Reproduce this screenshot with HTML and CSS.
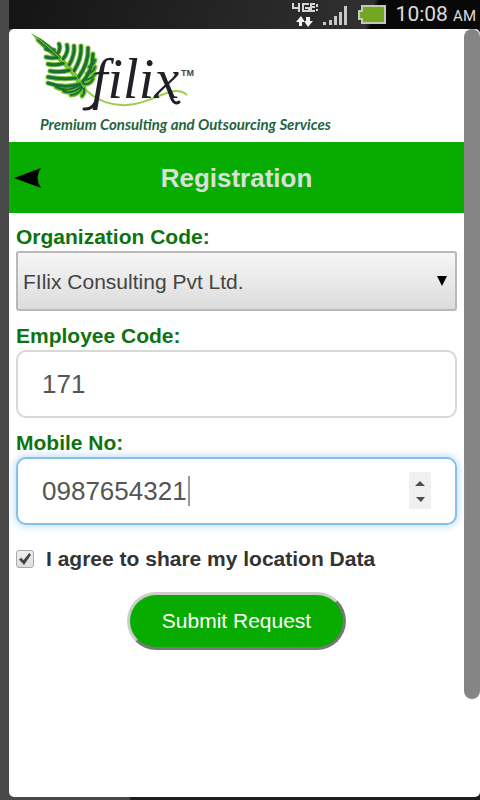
FILE: index.html
```html
<!DOCTYPE html>
<html lang="en">
<head>
  <meta charset="UTF-8">
  <meta name="viewport" content="width=device-width, initial-scale=1">
  <title>Registration</title>
  <link rel="stylesheet" href="styles.css">
</head>
<body>
  <!-- status bar -->
  <div class="statusbar">
    <svg class="network" width="28" height="26" viewBox="0 0 28 26" fill="none" stroke="#d4d4d4" stroke-width="2">
      <path d="M2 1v5h7M8 1v9M18 2h-6v7h6V6h-4M24 2h-4v7h4M20 5h4M26 2v3M26 7v2"/>
      <path d="M8 24v-4H5l5-6 4 6h-3v4zM15 15v4h-2l4 6 5-6h-3v-4z" fill="#f4f4f4" stroke="none"/>
    </svg>
    <svg class="signal" width="26" height="24" viewBox="0 0 26 24" fill="#c8c8c8">
      <path d="M0 19h3v3H0zM6 17h3v5H6zM11 13h3v9h-3zM16 9h3v13h-3zM21 3h3v19h-3z"/>
    </svg>
    <svg class="battery" width="30" height="20" viewBox="0 0 30 20">
      <path d="M5 1h23v17H5v-4H2V6h3z" fill="#72a81f" stroke="#c3c9b8" stroke-width="2"/>
    </svg>
    <span class="clock">10:08 <small>AM</small></span>
  </div>

  <div class="screen">
    <main class="content">
      <div class="logo">
        <svg width="170" height="84" viewBox="0 0 170 84" role="img" aria-label="filix">
          <path d="M53 55C66 70 85 77 106 73C130 68 145 53 158 64" fill="none" stroke="#9bcf4a" stroke-width="2"/>
          <!-- light leaf edges -->
          <g fill="none" stroke="#76c22f" stroke-width="5" stroke-linecap="round">
            <path d="M9 9Q22 20 34 31Q46 42 53 56"/>
            <path d="M25 19Q21 20 17 18M30 26Q24 28 17 26M35 32Q27 35 19 33M41 39Q31 42 21 40M47 47Q33 49 19 46M51 53Q35 58 19 52"/>
            <path d="M29 22Q32 17 30 13M34 28Q40 21 38 14M40 34Q46 24 45 15M45 40Q53 27 52 15M49 47Q60 32 59 17M52 53Q64 40 64 23"/>
            <path d="M51 54Q38 62 27 56M53 55Q43 64 34 60M54 56Q49 64 42 64M55 57Q56 62 53 65"/>
            <path d="M60 36Q64 35 66 29M58 43Q64 42 66 36M55 49Q62 49 66 43M54 53Q61 54 64 48"/>
          </g>
          <path d="M2 2L14 9 26 18 31 29 16 19z" fill="#4c9c29"/>
          <!-- dark leaflets -->
          <g fill="none" stroke="#187036" stroke-width="3" stroke-linecap="round">
            <path d="M10 9Q21 17 30 26"/>
            <path d="M25 19Q21 20 17 18M30 26Q24 28 17 26M35 32Q27 35 19 33M41 39Q31 42 21 40M47 47Q33 49 19 46M51 53Q35 58 19 52"/>
            <path d="M29 22Q32 17 30 13M34 28Q40 21 38 14M40 34Q46 24 45 15M45 40Q53 27 52 15M49 47Q60 32 59 17M52 53Q64 40 64 23"/>
            <path d="M51 54Q38 62 27 56M53 55Q43 64 34 60M54 56Q49 64 42 64M55 57Q56 62 53 65" stroke-width="2"/>
            <path d="M60 36Q64 35 66 29M58 43Q64 42 66 36M55 49Q62 49 66 43M54 53Q61 54 64 48" stroke-width="2"/>
          </g>
          <path d="M3 3Q24 19 37 33T55 57" stroke="#91d53d" fill="none"/>
          <!-- pen strokes that finish the f and the x -->
          <path d="M55 78Q64 79 68 68M141 62Q144 75 150 71" fill="none" stroke="#202026" stroke-width="3" stroke-linecap="round"/>
          <text class="logo-name" x="63" y="67">filix</text>
          <text class="logo-tm" x="152" y="45">TM</text>
        </svg>
        <p class="tagline">Premium Consulting and Outsourcing Services</p>
      </div>

      <header class="titlebar">
        <a class="back" href="#" aria-label="Back">
          <svg width="28" height="20" viewBox="0 0 28 20"><path d="M0 10L27 0Q20 10 27 20z"/></svg>
        </a>
        <h1>Registration</h1>
      </header>

      <form class="form">
        <div class="field">
          <label for="org">Organization Code:</label>
          <div class="control">
            <select id="org">
              <option>FIlix Consulting Pvt Ltd.</option>
            </select>
            <svg class="arrow" width="10" height="10" viewBox="0 0 10 10"><path d="M0 0h10L5 10z"/></svg>
          </div>
        </div>

        <div class="field">
          <label for="emp">Employee Code:</label>
          <input class="text" type="text" id="emp" value="171">
        </div>

        <div class="field">
          <label for="mobile">Mobile No:</label>
          <div class="control">
            <input class="text active" type="text" inputmode="numeric" id="mobile" value="0987654321">
            <span class="caret"></span>
            <svg class="spinner" width="22" height="37" viewBox="0 0 22 37">
              <path d="M0 0h22v37H0z" fill="#f0f0f0"/>
              <path d="M6 14l5-5 5 5zM7 25h9l-4 5z" fill="#4d4d4d"/>
            </svg>
          </div>
        </div>

        <div class="agree">
          <input type="checkbox" id="agree" checked>
          <label for="agree">I agree to share my location Data</label>
        </div>

        <button type="button" class="submit">Submit Request</button>
      </form>
    </main>
    <div class="scrollbar"><div class="thumb"></div></div>
  </div>
</body>
</html>
```
FILE: styles.css
```css
* { box-sizing: border-box; }

body {
  margin: 0;
  min-height: 100vh;
  padding: 0 0 3px 9px;
  display: flex;
  flex-direction: column;
  background: linear-gradient(90deg, #484848 130px, #1c1c1c 130px);
  font-family: "Liberation Sans", Arial, sans-serif;
  font-size: 21px;
  color: #333;
}

/* status bar */
.statusbar {
  height: 29px;
  padding-right: 4px;
  display: flex;
  align-items: center;
  justify-content: flex-end;
  background: linear-gradient(110deg, #141414, #303030 76%, #080808 77%);
  color: #ddd;
}
.network { margin-right: 4px; }
.signal { margin-right: 8px; }
.battery { margin-right: 9px; }
.clock { font: 21px/28px Roboto, sans-serif; }
.clock small { font-size: 15px; }

.screen {
  flex: 1;
  display: flex;
  background: #fff;
  border-radius: 5px;
  overflow: hidden;
}
.content { flex: 1; min-width: 0; }

.scrollbar { width: 16px; }
.thumb {
  height: 87.3%;
  background: #858585;
  border-radius: 8px;
}

/* logo */
.logo { height: 113px; padding: 2px 0 0 20px; }
.logo svg { display: block; }
.logo-name { font: italic 56px "Liberation Serif", serif; fill: #202026; }
.logo-tm { font: bold 9px "Liberation Sans", sans-serif; fill: #444; }
.tagline {
  margin: 0 0 0 11px;
  font: italic bold 15px/18px Lato, sans-serif;
  color: #23643f;
  white-space: nowrap;
}

.titlebar {
  position: relative;
  height: 71px;
  display: flex;
  align-items: center;
  justify-content: center;
  background: #08ac00;
}
.titlebar h1 { margin: 0; font-size: 26px; line-height: 30px; color: #d9e0d9; }
.back { position: absolute; left: 5px; display: flex; }

/* form */
.form { padding: 10px 7px; }
.field { margin-bottom: 11px; }
.field label {
  display: block;
  line-height: 28px;
  font-weight: bold;
  color: #0e720e;
}
.control { position: relative; }
select, .text {
  display: block;
  width: 100%;
  font-family: inherit;
}
select {
  appearance: none;
  height: 60px;
  padding: 0 5px;
  font-size: 21px;
  color: #444;
  background: linear-gradient(#f6f6f6, #dcdcdc);
  border: 2px solid #b9b9b9;
  border-radius: 3px;
}
.arrow { position: absolute; right: 10px; top: 25px; }
.text {
  height: 68px;
  padding: 0 24px;
  font-size: 26px;
  color: #555;
  background: #fff;
  border: 2px solid #d8d8d8;
  border-radius: 10px;
  outline: none;
}
.text.active {
  border-color: #85bff0;
  box-shadow: 0 0 10px #a8d3f5;
}
.caret {
  position: absolute;
  left: 172px;
  top: 19px;
  width: 2px;
  height: 30px;
  background: #999;
}
.spinner { position: absolute; right: 26px; top: 15px; }

.agree {
  display: flex;
  align-items: center;
  margin-top: 20px;
  line-height: 28px;
  font-weight: bold;
}
.agree input {
  appearance: none;
  width: 18px;
  height: 18px;
  margin: 0 12px 0 0;
  border: 1px solid #aaa;
  border-radius: 3px;
  background: linear-gradient(#eee, #ddd);
}
.agree input:checked::before {
  content: "";
  display: block;
  width: 12px;
  height: 12px;
  margin: 2px;
  background: #444;
  clip-path: polygon(0 55%, 18% 40%, 38% 60%, 85% 0, 100% 14%, 42% 100%);
}

.submit {
  display: block;
  margin: 19px auto 0;
  height: 58px;
  padding: 0 32px;
  font-family: inherit;
  font-size: 21px;
  color: #fff;
  background: #08ac00;
  border: 3px outset #ccc;
  border-radius: 29px;
}
```
